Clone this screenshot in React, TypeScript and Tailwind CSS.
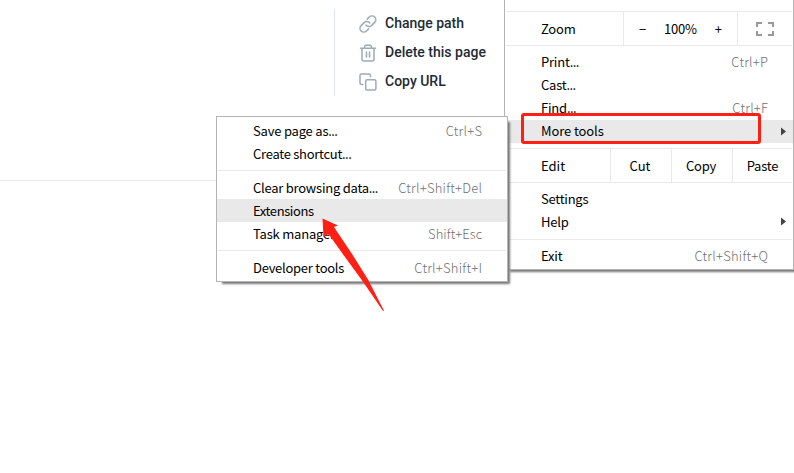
import React from 'react';

type ItemProps = { label: string; dots?: boolean; keys?: string; active?: boolean; arrow?: boolean; tracking?: string; nudge?: string };

function Item({ label, dots, keys, active, arrow, tracking = '', nudge = '' }: ItemProps) {
  return (
    <div className={`relative flex h-[23px] shrink-0 items-center justify-between pr-[25px] pl-9 ${nudge} ${active ? 'bg-[#e9e9e9]' : ''}`}>
      <span className={tracking}>
        {label}
        {dots && <span className="tracking-[-0.6px]">...</span>}
      </span>
      {keys && <span className={`-mr-[0.25px] font-light text-[#6f6f6f] ${keys.startsWith('Ctrl') ? 'tracking-[0.25px]' : 'tracking-[0.05px]'}`}>{keys}</span>}
      {arrow && (
        <svg className="absolute top-[7px] right-[7px]" width="5" height="9" viewBox="0 0 5 9">
          <path d="M0 .5v8l5-4z" fill="#444" />
        </svg>
      )}
    </div>
  );
}

function Line({ space }: { space: string }) {
  return <div className={`mx-px h-px shrink-0 bg-[#e9e9e9] ${space}`} />;
}

function LinkIcon() {
  return (
    <svg width="18" height="18" viewBox="0 0 18 18" fill="none" stroke="#9daab6" strokeWidth="1.5" strokeLinecap="round" strokeLinejoin="round">
      <path d="M7 10a3.700 3.700 0 0 0 5.700.400l3-3a3.800 3.800 0 0 0-5.400-5.400L8.200 4.100" />
      <path d="M10.800 8a3.700 3.700 0 0 0-5.700-.400l-3 3a3.800 3.800 0 0 0 5.400 5.400l2.100-2.100" />
    </svg>
  );
}

function TrashIcon() {
  return (
    <svg width="18" height="18" viewBox="0 0 18 18" fill="none" stroke="#9daab6" strokeWidth="1.500" strokeLinecap="round" strokeLinejoin="round">
      <path d="M1.500 4.200h15M3 4.200v11.200a1.500 1.500 0 0 0 1.500 1.500h9a1.500 1.500 0 0 0 1.500-1.500V4.200M5.600 4V2.500a1.300 1.300 0 0 1 1.300-1.300h4.200a1.300 1.300 0 0 1 1.300 1.300V4M7.500 8v5M10.500 8v5" />
    </svg>
  );
}

function CopyIcon() {
  return (
    <svg width="18" height="18" viewBox="0 0 18 18" fill="none" stroke="#9daab6" strokeWidth="1.500" strokeLinecap="round" strokeLinejoin="round">
      <rect x="6.700" y="6.700" width="10.200" height="10.200" rx="1.500" />
      <path d="M3.700 11.500H2.500A1.500 1.500 0 0 1 1 10V2.500A1.500 1.500 0 0 1 2.500 1H10a1.500 1.500 0 0 1 1.500 1.500v1.200" />
    </svg>
  );
}

function PageAction({ icon, text }: { icon: React.ReactNode; text: string }) {
  return (
    <div className="flex h-[29px] items-center gap-2">
      <span className="pt-px">{icon}</span>
      <span>{text}</span>
    </div>
  );
}

export default function App() {
  return (
    <div className="relative h-[473px] w-[794px] overflow-hidden bg-white font-['Noto_Sans_CJK_SC',sans-serif] text-[13px] leading-[23px] text-black">
      <div className="flex">
        <div className="h-[181px] w-[334px] border-b border-[#e8ebf1]" />
        <div className="mt-[9px] h-[87px] border-l border-[#dfe5ee] pl-[24px] font-['Roboto',sans-serif] text-[14px] font-medium text-[#232b36]">
          <PageAction icon={<LinkIcon />} text="Change path" />
          <PageAction icon={<TrashIcon />} text="Delete this page" />
          <PageAction icon={<CopyIcon />} text="Copy URL" />
        </div>
      </div>

      <div className="absolute top-[-1px] left-[504px] flex h-[271px] w-[290px] flex-col border border-[#b4b4b4] bg-white pt-[11px] shadow-[4px_4px_2px_-2px_#777]">
        <Line space="" />
        <div className="mx-px flex h-[33px] shrink-0 items-center">
          <span className="w-[117px] pl-[35px] tracking-[-0.2px]">Zoom</span>
          <div className="flex h-full w-[115px] items-center justify-between border-x border-[#e9e9e9] px-[15px] pb-px">
            <span>−</span>
            <span className="tracking-[-0.2px]">100%</span>
            <span>+</span>
          </div>
          <svg className="ml-[18px]" width="18" height="14" viewBox="0 0 18 14" fill="none" stroke="#999" strokeWidth="2">
            <path d="M1 5V1h5M12 1h5v4M17 9v4h-5M6 13H1V9" />
          </svg>
        </div>
        <Line space="mb-[4px]" />
        <Item label="Print" dots keys="Ctrl+P" tracking="tracking-[-0.2px]" />
        <Item label="Cast" dots tracking="tracking-[-0.2px]" />
        <Item label="Find" dots keys="Ctrl+F" tracking="tracking-[-0.2px]" />
        <div className="mt-px flex flex-col">
          <Item label="More tools" active arrow tracking="tracking-[-0.1px]" nudge="pb-[2px]" />
        </div>
        <Line space="mt-[5px]" />
        <div className="mx-px flex h-[33px] shrink-0 items-center">
          <span className="w-[104px] pl-[35px]">Edit</span>
          <div className="flex h-full w-[61px] items-center justify-center border-l border-[#e9e9e9] pr-[2px] pb-px">Cut</div>
          <div className="flex h-full w-[61px] items-center justify-center border-l border-[#e9e9e9] pr-[2px] pb-px tracking-[-0.2px]">Copy</div>
          <div className="flex h-full w-[60px] items-center justify-center border-l border-[#e9e9e9] pb-px tracking-[-0.2px]">Paste</div>
        </div>
        <Line space="mb-[4px]" />
        <Item label="Settings" tracking="tracking-[-0.25px]" />
        <Item label="Help" arrow tracking="tracking-[-0.2px]" />
        <Line space="mt-[6px] mb-[5px]" />
        <Item label="Exit" keys="Ctrl+Shift+Q" tracking="tracking-[-0.2px]" nudge="pb-[2px]" />
      </div>

      <div className="absolute top-[116px] left-[216px] flex h-[166px] w-[292px] flex-col border border-[#b4b4b4] bg-white pt-[2px] shadow-[4px_4px_2px_-2px_#777]">
        <Item label="Save page as" dots keys="Ctrl+S" tracking="tracking-[-0.2px]" />
        <Item label="Create shortcut" dots tracking="tracking-[-0.27px]" />
        <Line space="my-[5px]" />
        <Item label="Clear browsing data" dots keys="Ctrl+Shift+Del" tracking="tracking-[-0.24px]" />
        <Item label="Extensions" active tracking="tracking-[-0.4px]" />
        <Item label="Task manager" keys="Shift+Esc" tracking="tracking-[-0.2px]" />
        <Line space="my-[5px]" />
        <Item label="Developer tools" keys="Ctrl+Shift+I" tracking="tracking-[-0.27px]" />
      </div>

      <div className="absolute top-[113px] left-[521px] h-[31px] w-[240px] rounded-[3px] border-3 border-[#ff2015]" />
      <svg className="absolute top-[212px] left-[316px]" width="75" height="105" viewBox="316 212 75 105">
        <path d="M322.500 218.500L338 225.500L334 227L352.700 255L368.300 280L384 310.800L383 311L362.500 281L343.500 255L328.500 234L323.500 237Z" fill="#ff2015" />
      </svg>
    </div>
  );
}
